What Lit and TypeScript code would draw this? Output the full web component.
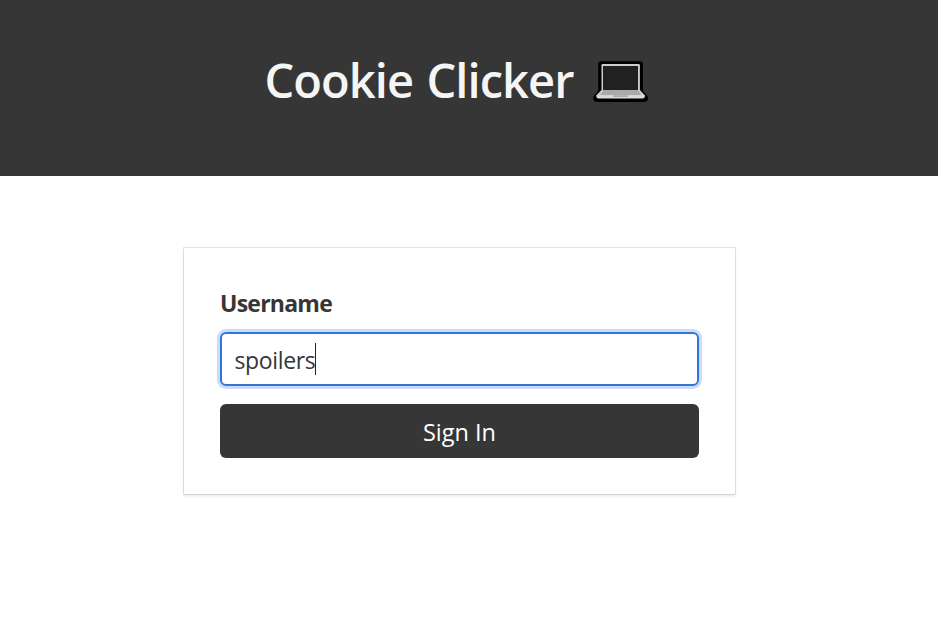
import { LitElement, html, css, svg } from "lit";
import { customElement, property } from "lit/decorators.js";

const laptop = svg`
  <path d="M8 0.3H47Q50 0.3 50 3.3V28.5Q50 30 51 31.2L53.7 34Q55 35.4 55 37Q55 41 51 41H4.2Q0.2 41 0.2 37Q0.2 35.4 1.5 34L4.2 31.2Q5.2 30 5.2 28.5V3.3Q5.2 0.3 8 0.3Z" fill="#000"/>
  <path d="M8.5 29.2V4.2Q8.5 3 9.7 3H45.7Q46.9 3 46.9 4.2V29.2Z" fill="#ccc"/>
  <path d="M10 5H45V29H10Z" fill="#212121"/>
  <path d="M8.5 29H46.9L51.8 34.3V35H3.4V34.3Z" fill="#ccc"/>
  <path d="M10.2 29H45.2L48 34H7.4Z" fill="#aaa"/>
  <path d="M3.4 34.2H51.8V35.5Q51.8 37.4 49.8 37.4H5.4Q3.4 37.4 3.4 35.5Z" fill="#dadada"/>
  <path d="M20.2 34.2H35V35Q35 36 34 36H21.2Q20.2 36 20.2 35Z" fill="#aaa"/>`;

@customElement("app-header")
class AppHeader extends LitElement {
  static styles = css`
    :host { display: block; background: #363636; color: #f5f5f5; height: 176px; }
    .title {
      display: flex; justify-content: center; align-items: flex-start; margin: 0;
      padding: 53px 26px 0 0; box-sizing: border-box;
      font: 600 47px/54px "Open Sans", "Noto Sans", sans-serif; white-space: pre;
    }
    .name { letter-spacing: -0.92px; word-spacing: 2px; }
    .laptop { width: 55px; height: 42px; margin: 8px 0 0 19px; }
  `;
  render() {
    return html`<h1 class="title"><span class="name">Cookie Clicker</span><svg class="laptop" viewBox="0 0 55 42">${laptop}</svg></h1>`;
  }
}

@customElement("login-card")
class LoginCard extends LitElement {
  @property() username = "spoilers";
  static styles = css`
    :host {
      display: block; box-sizing: border-box; width: 551px; height: 246px; padding: 36px;
      background: #fff; color: #363636;
      box-shadow: 0 2px 3px rgba(10, 10, 10, 0.1), 0 0 0 1px rgba(10, 10, 10, 0.1);
      font: 24px/36px "Open Sans", "Noto Sans", sans-serif;
    }
    .label {
      display: block; height: 36px; box-sizing: border-box; padding-top: 1px; margin-bottom: 12px;
      font-weight: 700; font-size: 23px; letter-spacing: -0.75px;
    }
    .input {
      display: flex; align-items: center; height: 54px; box-sizing: border-box;
      border: 2px solid #3273dc; border-radius: 6px; padding: 0 13px 0 12.5px;
      box-shadow: 0 0 0 3px rgba(50, 115, 220, 0.25);
    }
    .value { padding-top: 1px; font-size: 23px; letter-spacing: -0.37px; }
    .caret { width: 1px; height: 32px; background: #222; }
    .button {
      display: flex; width: 100%; height: 54px; margin: 18px 0 0; padding: 1px 0 0; border: 0; border-radius: 6px;
      align-items: center; justify-content: center; background: #363636; color: #fff; font: inherit;
      font-size: 23.5px;
    }
  `;
  render() {
    return html`
      <label class="label"><span class="label-text">Username</span></label>
      <div class="input" role="textbox"><span class="value">${this.username}</span><span class="caret"></span></div>
      <button class="button"><span class="button-text">Sign In</span></button>`;
  }
}

@customElement("app-root")
class AppRoot extends LitElement {
  static styles = css`
    :host { display: block; min-height: 629px; background: #fff; }
    .main { display: flex; justify-content: center; padding: 72px 19px 0 0; }
  `;
  render() {
    return html`<app-header></app-header><main class="main"><login-card></login-card></main>`;
  }
}
